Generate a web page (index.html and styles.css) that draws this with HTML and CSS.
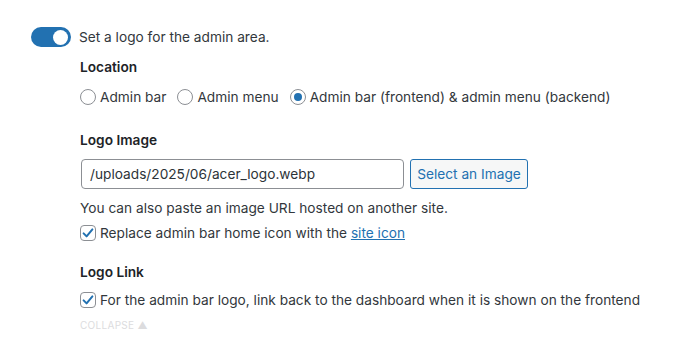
FILE: index.html
```html
<!DOCTYPE html>
<html>
<head>
<meta charset="utf-8">
<link rel="stylesheet" href="styles.css">
</head>
<body>
<div class="panel">
  <label class="toggle-row">
    <span class="toggle"><span class="knob"></span></span>
    <span>Set a logo for the admin area.</span>
  </label>
  <div class="sub">
    <div class="heading h-location">Location</div>
    <div class="radios">
      <label class="opt"><span class="radio"></span>Admin bar</label>
      <label class="opt"><span class="radio"></span>Admin menu</label>
      <label class="opt"><span class="radio checked"></span>Admin bar (frontend) &amp; admin menu (backend)</label>
    </div>
    <div class="heading h-image">Logo Image</div>
    <div class="image-row">
      <div class="input">/uploads/2025/06/acer_logo.webp</div>
      <div class="button">Select an Image</div>
    </div>
    <div class="help">You can also paste an image URL hosted on another site.</div>
    <label class="opt check-row1"><span class="checkbox"><svg viewBox="0 0 16 16" width="16" height="16"><path d="M3.6 8.4 L6.6 11.4 L12.4 4.4" fill="none" stroke="#2271b1" stroke-width="2" stroke-linecap="round" stroke-linejoin="round"/></svg></span>Replace admin bar home icon with the&nbsp;<a class="link" href="#">site icon</a></label>
    <div class="heading h-link">Logo Link</div>
    <label class="opt check-row2"><span class="checkbox"><svg viewBox="0 0 16 16" width="16" height="16"><path d="M3.6 8.4 L6.6 11.4 L12.4 4.4" fill="none" stroke="#2271b1" stroke-width="2" stroke-linecap="round" stroke-linejoin="round"/></svg></span>For the admin bar logo, link back to the dashboard when it is shown on the frontend</label>
    <div class="collapse">COLLAPSE &#9650;</div>
  </div>
</div>
</body>
</html>
```
FILE: styles.css
```css
html, body {
  margin: 0;
  padding: 0;
  background: #ffffff;
}
body {
  font-family: Inter, "Liberation Sans", sans-serif;
  font-size: 13.7px;
  line-height: 20px;
  color: #32373c;
}
.panel {
  padding: 27px 0 0 31px;
}
.toggle-row {
  display: flex;
  align-items: center;
  gap: 8px;
  height: 20px;
}
.toggle {
  width: 40px;
  height: 20px;
  border-radius: 10px;
  background: #2271b1;
  display: flex;
  align-items: center;
  justify-content: flex-end;
  padding-right: 3px;
  box-sizing: border-box;
}
.knob {
  width: 15px;
  height: 15px;
  border-radius: 50%;
  background: #fff;
}
.sub {
  padding-left: 49px;
}
.heading {
  font-weight: 600;
  color: #1d2327;
  height: 20px;
}
.h-location { margin-top: 10px; }
.radios {
  margin-top: 10px;
  display: flex;
  gap: 11px;
  height: 20px;
}
.opt {
  display: flex;
  align-items: center;
  height: 20px;
  white-space: nowrap;
}
.radio {
  width: 16px;
  height: 16px;
  box-sizing: border-box;
  border: 1px solid #8c8f94;
  border-radius: 50%;
  margin-right: 4px;
  display: flex;
  align-items: center;
  justify-content: center;
  background: #fff;
}
.radio.checked::after {
  content: "";
  width: 8px;
  height: 8px;
  border-radius: 50%;
  background: #2271b1;
}
.h-image { margin-top: 23px; }
.image-row {
  margin-top: 9px;
  display: flex;
  gap: 6px;
  height: 30px;
}
.input {
  width: 323px;
  height: 30px;
  box-sizing: border-box;
  border: 1px solid #8c8f94;
  border-radius: 4px;
  padding: 0 8px;
  line-height: 28px;
  color: #2c3338;
  margin-left: 1px;
}
.button {
  width: 118px;
  height: 30px;
  box-sizing: border-box;
  border: 1px solid #2271b1;
  border-radius: 3px;
  background: #f6f7f7;
  color: #2271b1;
  text-align: center;
  line-height: 28px;
}
.help { margin-top: 9px; }
.check-row1 { margin-top: 5px; }
.checkbox {
  width: 16px;
  height: 16px;
  box-sizing: border-box;
  border: 1px solid #8c8f94;
  border-radius: 4px;
  margin-right: 4px;
  display: flex;
  align-items: center;
  justify-content: center;
  overflow: hidden;
}
.checkbox svg { flex: none; }
.link {
  color: #2271b1;
  text-decoration: underline;
}
.h-link { margin-top: 19px; }
.check-row2 { margin-top: 8px; }
.collapse {
  margin-top: 8px;
  font-size: 10px;
  line-height: 14px;
  color: #dcdcde;
  letter-spacing: 0.3px;
}
```
